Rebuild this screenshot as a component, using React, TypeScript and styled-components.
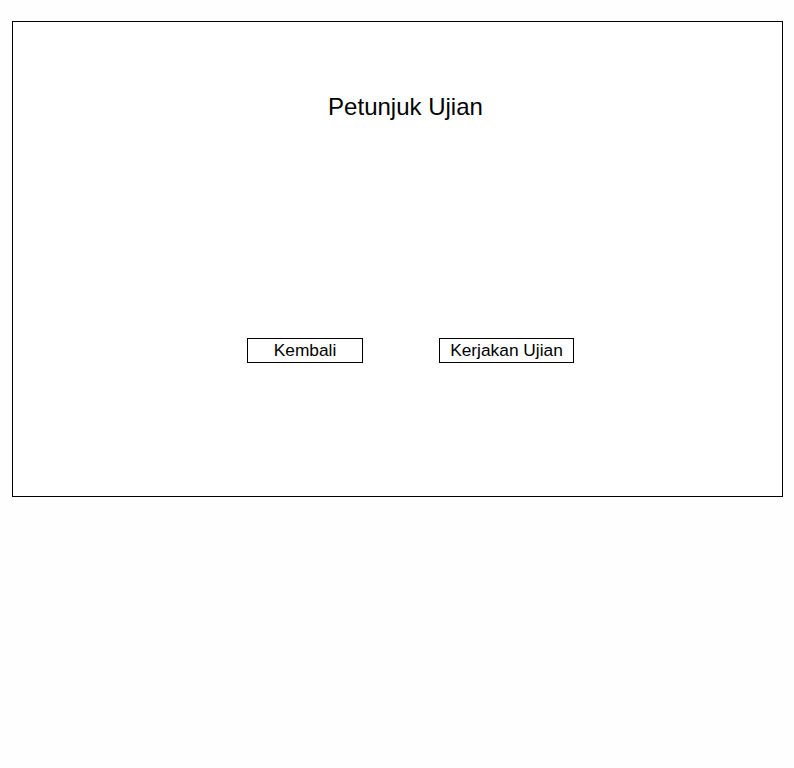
import React from "react";
import styled, { createGlobalStyle } from "styled-components";

const GlobalStyle = createGlobalStyle`
  body {
    margin: 0;
    background: #fefefe;
    font-family: "Liberation Sans", Arial, sans-serif;
    color: #000;
  }
`;

const Page = styled.div`
  padding: 21px 0 0 12px;
`;

const Frame = styled.section`
  box-sizing: border-box;
  width: 771px;
  height: 476px;
  border: 1px solid #000;
  background: #fff;
  padding-left: 16px;
  display: flex;
  flex-direction: column;
  align-items: center;
`;

const Title = styled.h1`
  margin: 71px 0 0;
  font-size: 24px;
  font-weight: normal;
`;

const Actions = styled.div`
  margin: 217px 0 0 10px;
  display: flex;
  gap: 76px;
`;

const Button = styled.button<{ $width: number }>`
  box-sizing: border-box;
  width: ${(p) => p.$width}px;
  height: 25px;
  padding: 0;
  border: 1px solid #000;
  background: #fff;
  font-family: "Liberation Sans", Arial, sans-serif;
  font-size: 13pt;
  line-height: 1;
  color: #000;
`;

const App = () => {
  return (
    <Page>
      <GlobalStyle />
      <Frame>
        <Title>Petunjuk Ujian</Title>
        <Actions>
          <Button $width={116}>Kembali</Button>
          <Button $width={135}>Kerjakan Ujian</Button>
        </Actions>
      </Frame>
    </Page>
  );
};

export default App;
